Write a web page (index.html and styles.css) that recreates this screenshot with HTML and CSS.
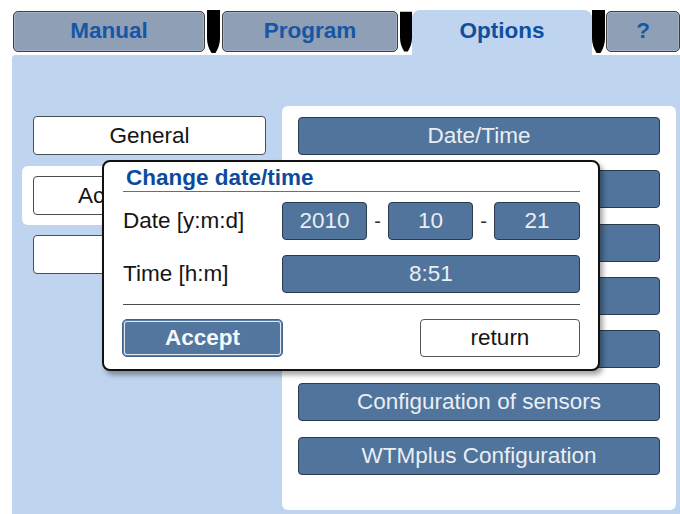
FILE: index.html
```html
<!DOCTYPE html>
<html>
<head>
<meta charset="utf-8">
<link rel="stylesheet" href="styles.css">
</head>
<body>
<div class="screen">
  <div class="tabbar">
    <div class="tab tab-manual">Manual</div>
    <svg class="sep sep1" viewBox="0 0 13 44" width="13" height="44"><path d="M0 0H13V28Q13 36 8.5 43H4.5Q0 36 0 28Z" fill="#000"/></svg>
    <div class="tab tab-program">Program</div>
    <svg class="sep sep2" viewBox="0 0 13 44" width="12" height="44"><path d="M0 0H13V28Q13 36 8.5 43H4.5Q0 36 0 28Z" fill="#000"/></svg>
    <div class="tab tab-active">Options</div>
    <svg class="sep sep3" viewBox="0 0 13 44" width="13" height="44"><path d="M0 0H13V28Q13 36 8.5 43H4.5Q0 36 0 28Z" fill="#000"/></svg>
    <div class="tab tab-help">?</div>
  </div>
  <div class="body">
    <div class="leftcol">
      <div class="lbtn">General</div>
      <div class="lsel"><div class="lbtn lbtn-cut"><span class="cut">Access control</span></div></div>
      <div class="lbtn lbtn-last"></div>
    </div>
    <div class="rpanel">
      <div class="rbtn">Date/Time</div>
      <div class="rbtn"></div>
      <div class="rbtn"></div>
      <div class="rbtn"></div>
      <div class="rbtn"></div>
      <div class="rbtn">Configuration of sensors</div>
      <div class="rbtn">WTMplus Configuration</div>
    </div>
  </div>
  <div class="dialog">
    <div class="dtitle">Change date/time</div>
    <div class="drow drow-date">
      <div class="dlabel">Date [y:m:d]</div>
      <div class="field f-year">2010</div>
      <div class="dash">-</div>
      <div class="field f-mon">10</div>
      <div class="dash">-</div>
      <div class="field f-day">21</div>
    </div>
    <div class="drow drow-time">
      <div class="dlabel">Time [h:m]</div>
      <div class="field f-time">8:51</div>
    </div>
    <div class="dactions">
      <div class="accept">Accept</div>
      <div class="ret">return</div>
    </div>
  </div>
</div>
</body>
</html>
```
FILE: styles.css
```css
html, body {
  margin: 0;
  padding: 0;
  background: #ffffff;
  width: 680px;
  height: 514px;
  overflow: hidden;
}
body {
  font-family: "Liberation Sans", Arial, sans-serif;
}
.screen {
  position: relative;
  margin: 10px 0 0 12px;
  width: 668px;
  height: 504px;
}
.tabbar {
  display: flex;
  align-items: flex-start;
  height: 45px;
}
.tab {
  box-sizing: border-box;
  height: 41px;
  margin-top: 1px;
  background: #8e9fb6;
  border: 1px solid #3a3e45;
  border-radius: 5px;
  box-shadow: inset 0 0 0 1px #a3b2c6;
  color: #1656a5;
  font-weight: bold;
  font-size: 22.5px;
  display: flex;
  align-items: center;
  justify-content: center;
  padding-bottom: 2px;
}
.tab-manual { margin-left: 1px; width: 192px; }
.sep { display: block; flex: none; }
.sep1 { margin-left: 2px; }
.tab-program { margin-left: 2px; width: 176px; }
.sep2 { margin-left: 2px; }
.tab-active {
  width: 180px;
  height: 45px;
  margin-top: 0;
  background: #bfd4ef;
  border: none;
  box-shadow: none;
  border-radius: 8px 8px 0 0;
  padding-bottom: 4px;
  color: #0e4f9f;
}
.tab-help { margin-left: 1px; width: 74px; }
.body {
  display: flex;
  align-items: flex-start;
  width: 668px;
  height: 459px;
  background: #bfd4ef;
  border-radius: 4px 0 0 0;
}
.leftcol {
  width: 270px;
  padding-top: 61px;
  padding-left: 21px;
  box-sizing: border-box;
  display: flex;
  flex-direction: column;
}
.lbtn {
  box-sizing: border-box;
  width: 233px;
  height: 39px;
  background: #ffffff;
  border: 1px solid #4a4d52;
  border-radius: 4px;
  color: #151515;
  font-size: 22.5px;
  display: flex;
  align-items: center;
  justify-content: center;
  white-space: nowrap;
}
.lbtn-cut {
  justify-content: flex-start;
  padding-left: 44px;
}
.cut {
  display: block;
  width: 25px;
  overflow: hidden;
  white-space: nowrap;
}
.lsel {
  margin-top: 11px;
  margin-left: -11px;
  width: 260px;
  box-sizing: border-box;
  padding: 10px 0 10px 11px;
  background: #ffffff;
  border-radius: 6px 0 0 6px;
}
.lbtn-last { margin-top: 10px; }
.rpanel {
  box-sizing: border-box;
  margin-top: 51px;
  width: 394px;
  height: 404px;
  background: #ffffff;
  border-radius: 6px;
  padding: 11px 0 0 16px;
  display: flex;
  flex-direction: column;
  gap: 15.3px;
}
.rbtn {
  box-sizing: border-box;
  width: 362px;
  height: 38px;
  background: #50749b;
  border: 1px solid #2c3a4d;
  border-radius: 4px;
  color: #e9eef5;
  font-size: 22.5px;
  display: flex;
  align-items: center;
  justify-content: center;
  white-space: nowrap;
}
.dialog {
  position: absolute;
  left: 90px;
  top: 150px;
  box-sizing: border-box;
  width: 498px;
  height: 211px;
  background: #ffffff;
  border: 2px solid #111;
  border-radius: 8px;
  box-shadow: 3px 4px 5px rgba(0, 0, 0, 0.35);
  padding: 3px 18px 0 19px;
}
.dtitle {
  color: #0c4b9c;
  font-weight: bold;
  font-size: 22.5px;
  line-height: 26px;
  padding-left: 3px;
  border-bottom: 1px solid #6d6d6d;
}
.drow {
  display: flex;
  align-items: center;
  height: 38px;
}
.drow-date { margin-top: 10px; }
.drow-time { margin-top: 15px; }
.dlabel {
  width: 159px;
  font-size: 22.5px;
  color: #151515;
  white-space: nowrap;
}
.field {
  box-sizing: border-box;
  height: 38px;
  background: #50749b;
  border: 1px solid #2c3a4d;
  border-radius: 4px;
  color: #e9eef5;
  font-size: 22.5px;
  display: flex;
  align-items: center;
  justify-content: center;
}
.f-year, .f-mon { width: 85px; }
.f-day { width: 86px; }
.f-time { width: 298px; }
.dash {
  width: 21px;
  text-align: center;
  font-size: 20px;
  color: #333;
}
.dactions {
  margin-top: 11px;
  border-top: 1px solid #4d4d4d;
  padding-top: 14px;
  display: flex;
  justify-content: space-between;
}
.accept {
  box-sizing: border-box;
  width: 161px;
  height: 38px;
  margin-left: -1px;
  background: #52769d;
  border: 1px solid #3d638d;
  border-radius: 5px;
  box-shadow: inset 0 0 0 1px #5a7ea6, inset 0 0 0 2px #dfe8f2;
  color: #f4f7fb;
  font-weight: bold;
  font-size: 22.5px;
  display: flex;
  align-items: center;
  justify-content: center;
}
.ret {
  box-sizing: border-box;
  width: 160px;
  height: 38px;
  background: #ffffff;
  border: 1px solid #555;
  border-radius: 4px;
  color: #151515;
  font-size: 22.5px;
  display: flex;
  align-items: center;
  justify-content: center;
}
```
